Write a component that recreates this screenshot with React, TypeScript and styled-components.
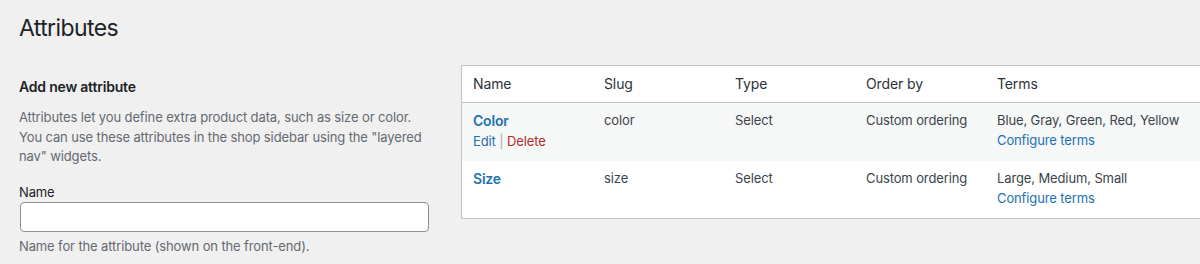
import React from 'react';
import styled, { createGlobalStyle } from 'styled-components';

const GlobalStyle = createGlobalStyle`
  html, body {
    margin: 0;
    padding: 0;
    background: #f0f0f1;
    overflow: hidden;
  }
  body {
    font-family: Inter, "Liberation Sans", sans-serif;
    color: #3c434a;
    font-size: 13px;
    letter-spacing: -0.12px;
  }
`;

const Page = styled.div`
  padding: 13px 0 0 19px;
  width: 1240px;
`;

const Title = styled.h1`
  margin: 0;
  font-size: 23px;
  font-weight: 400;
  line-height: 30px;
  letter-spacing: -0.6px;
  color: #1d2327;
`;

const Columns = styled.div`
  display: flex;
  align-items: flex-start;
  gap: 31px;
  margin-top: 22px;
`;

const LeftCol = styled.div`
  width: 411px;
  flex: none;
`;

const FormTitle = styled.h2`
  margin: 12px 0 0;
  font-size: 14px;
  font-weight: 600;
  line-height: 20px;
  letter-spacing: -0.2px;
  color: #1d2327;
`;

const Intro = styled.p`
  margin: 11px 0 0;
  line-height: 19.5px;
  color: #646970;
`;

const Label = styled.label`
  display: block;
  margin-top: 15px;
  line-height: 20px;
  color: #1d2327;
`;

const TextInput = styled.input`
  display: block;
  box-sizing: border-box;
  width: 409px;
  height: 30px;
  margin: 0 0 0 1px;
  border: 1px solid #8c8f94;
  border-radius: 4px;
  background: #fff;
`;

const Help = styled.p`
  margin: 4px 0 0;
  line-height: 20px;
  color: #646970;
`;

const Table = styled.table`
  width: 780px;
  flex: none;
  border-collapse: collapse;
  background: #fff;
  border: 1px solid #c3c4c7;
  table-layout: fixed;
`;

const Th = styled.th<{ $w?: number }>`
  width: ${({ $w }) => ($w ? `${$w}px` : 'auto')};
  text-align: left;
  font-weight: 400;
  font-size: 14px;
  line-height: 20px;
  color: #2c3338;
  padding: 8px 10px 8px 11px;
  border-bottom: 1px solid #c3c4c7;
`;

const Row = styled.tr<{ $alt?: boolean }>`
  background: ${({ $alt }) => ($alt ? '#f6f7f7' : '#fff')};
`;

const Td = styled.td`
  vertical-align: top;
  padding: 8px 10px 10px 11px;
  line-height: 19.5px;
  color: #3c434a;
`;

const RowTitle = styled.a`
  display: block;
  font-size: 14px;
  font-weight: 600;
  letter-spacing: -0.2px;
  color: #2271b1;
  text-decoration: none;
`;

const Actions = styled.div`
  margin-top: 1px;
  color: #a7aaad;
`;

const Link = styled.a<{ $danger?: boolean }>`
  color: ${({ $danger }) => ($danger ? '#b32d2e' : '#2271b1')};
  text-decoration: none;
`;

const BlockLink = styled(Link)`
  display: block;
`;

const rows = [
  { name: 'Color', slug: 'color', terms: 'Blue, Gray, Green, Red, Yellow', actions: true },
  { name: 'Size', slug: 'size', terms: 'Large, Medium, Small', actions: false },
];

export default function App() {
  return (
    <>
      <GlobalStyle />
      <Page>
        <Title>Attributes</Title>
        <Columns>
          <LeftCol>
            <FormTitle>Add new attribute</FormTitle>
            <Intro>
              Attributes let you define extra product data, such as size or color. You can use these
              attributes in the shop sidebar using the "layered nav" widgets.
            </Intro>
            <Label htmlFor="attribute_label">Name</Label>
            <TextInput id="attribute_label" type="text" />
            <Help>Name for the attribute (shown on the front-end).</Help>
          </LeftCol>
          <Table>
            <thead>
              <tr>
                <Th $w={110}>Name</Th>
                <Th $w={110}>Slug</Th>
                <Th $w={110}>Type</Th>
                <Th $w={110}>Order by</Th>
                <Th>Terms</Th>
              </tr>
            </thead>
            <tbody>
              {rows.map((r, i) => (
                <Row key={r.slug} $alt={i % 2 === 0}>
                  <Td>
                    <RowTitle href="#">{r.name}</RowTitle>
                    {r.actions && (
                      <Actions>
                        <Link href="#">Edit</Link> | <Link href="#" $danger>Delete</Link>
                      </Actions>
                    )}
                  </Td>
                  <Td>{r.slug}</Td>
                  <Td>Select</Td>
                  <Td>Custom ordering</Td>
                  <Td>
                    {r.terms}
                    <BlockLink href="#">Configure terms</BlockLink>
                  </Td>
                </Row>
              ))}
            </tbody>
          </Table>
        </Columns>
      </Page>
    </>
  );
}
